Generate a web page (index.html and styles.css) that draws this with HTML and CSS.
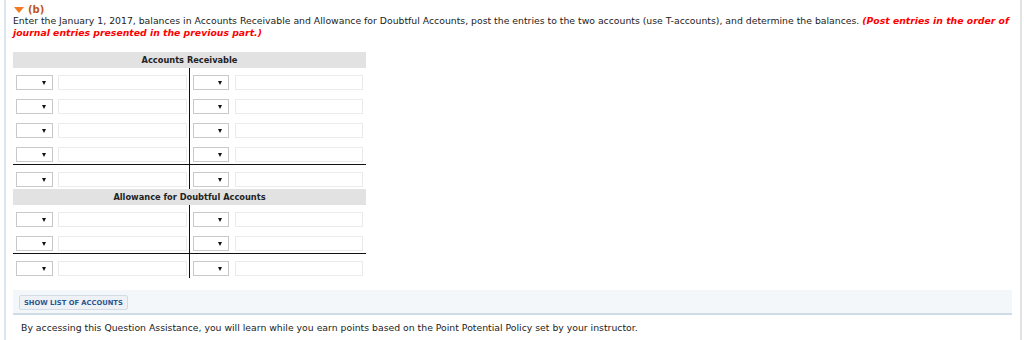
FILE: index.html
```html
<!DOCTYPE html>
<html lang="en">
<head>
    <meta charset="UTF-8">
    <meta name="viewport" content="width=device-width, initial-scale=1.0">
    <title>T-Accounts</title>
    <link rel="stylesheet" href="styles.css">
</head>
<body>
    <div class="question">
        <div class="part-title">
            <span class="caret"></span>
            <span class="part-label">(b)</span>
        </div>
        <p class="instructions">
            Enter the January 1, 2017, balances in Accounts Receivable and Allowance for Doubtful Accounts, post the entries to the two accounts (use T-accounts), and determine the balances.
            <em class="note">(Post entries in the order of journal entries presented in the previous part.)</em>
        </p>

        <div class="t-account">
            <div class="t-head">Accounts Receivable</div>
            <div class="t-section entries">
                <div class="t-side debit">
                    <div class="t-row"><span class="dropdown"></span><input type="text" class="amount"></div>
                    <div class="t-row"><span class="dropdown"></span><input type="text" class="amount"></div>
                    <div class="t-row"><span class="dropdown"></span><input type="text" class="amount"></div>
                    <div class="t-row"><span class="dropdown"></span><input type="text" class="amount"></div>
                </div>
                <div class="t-side credit">
                    <div class="t-row"><span class="dropdown"></span><input type="text" class="amount"></div>
                    <div class="t-row"><span class="dropdown"></span><input type="text" class="amount"></div>
                    <div class="t-row"><span class="dropdown"></span><input type="text" class="amount"></div>
                    <div class="t-row"><span class="dropdown"></span><input type="text" class="amount"></div>
                </div>
            </div>
            <div class="t-section balance">
                <div class="t-side debit">
                    <div class="t-row"><span class="dropdown"></span><input type="text" class="amount"></div>
                </div>
                <div class="t-side credit">
                    <div class="t-row"><span class="dropdown"></span><input type="text" class="amount"></div>
                </div>
            </div>
        </div>

        <div class="t-account">
            <div class="t-head">Allowance for Doubtful Accounts</div>
            <div class="t-section entries">
                <div class="t-side debit">
                    <div class="t-row"><span class="dropdown"></span><input type="text" class="amount"></div>
                    <div class="t-row"><span class="dropdown"></span><input type="text" class="amount"></div>
                </div>
                <div class="t-side credit">
                    <div class="t-row"><span class="dropdown"></span><input type="text" class="amount"></div>
                    <div class="t-row"><span class="dropdown"></span><input type="text" class="amount"></div>
                </div>
            </div>
            <div class="t-section balance">
                <div class="t-side debit">
                    <div class="t-row"><span class="dropdown"></span><input type="text" class="amount"></div>
                </div>
                <div class="t-side credit">
                    <div class="t-row"><span class="dropdown"></span><input type="text" class="amount"></div>
                </div>
            </div>
        </div>

        <div class="accounts-bar">
            <button class="accounts-btn">SHOW LIST OF ACCOUNTS</button>
        </div>

        <p class="assist">By accessing this Question Assistance, you will learn while you earn points based on the Point Potential Policy set by your instructor.</p>
    </div>
</body>
</html>
```

FILE: styles.css
```css
body {
    margin: 0;
    font-family: "DejaVu Sans", Verdana, sans-serif;
    font-size: 9.3px;
    color: #222;
    background-color: #fff;
}
.question {
    margin: 0 2px 0 4px;
    border-left: 2px solid #dbe5ef;
    border-right: 2px solid #e2e2e2;
    padding: 4px 8px 0 7px;
    height: 340px;
    box-sizing: border-box;
}
.part-title {
    display: flex;
    align-items: center;
    gap: 4px;
    height: 10px;
    line-height: 10px;
    padding: 1px 0 0 1px;
}
.caret {
    width: 0;
    height: 0;
    border-left: 5.5px solid transparent;
    border-right: 5.5px solid transparent;
    border-top: 6px solid #f47920;
}
.part-label {
    font-size: 10px;
    font-weight: bold;
    color: #c0561c;
}
.instructions {
    margin: 0;
    line-height: 12px;
}
.note {
    color: #f00;
    font-weight: bold;
}
.t-account {
    width: 353px;
    margin-top: 13px;
}
.t-account + .t-account {
    margin-top: 0;
}
.t-head {
    background-color: #e2e2e2;
    height: 16px;
    line-height: 16px;
    text-align: center;
    font-size: 8.25px;
    font-weight: bold;
}
.t-section {
    display: grid;
    grid-template-columns: 177px 176px;
}
.t-section.entries {
    border-bottom: 1px solid #111;
}
.t-side {
    display: flex;
    flex-direction: column;
    gap: 9px;
    padding: 7px 0 2px 3px;
}
.t-side.debit {
    border-right: 1px solid #111;
}
.t-row {
    display: flex;
    gap: 5px;
    height: 15px;
}
.credit .t-row {
    gap: 6px;
}
.dropdown {
    position: relative;
    width: 37px;
    height: 15px;
    border: 1px solid #c9c9c9;
    box-sizing: border-box;
    background-color: #fff;
}
.credit .dropdown {
    width: 36px;
}
.dropdown::after {
    content: "";
    position: absolute;
    right: 6px;
    top: 5px;
    border-left: 2.5px solid transparent;
    border-right: 2.5px solid transparent;
    border-top: 4px solid #111;
}
.amount {
    width: 129px;
    height: 15px;
    margin: 0;
    padding: 0;
    border: 1px solid #ebebeb;
    box-sizing: border-box;
}
.credit .amount {
    width: 128px;
}
.accounts-bar {
    margin-top: 12px;
    background-color: #f4f7fa;
    border-bottom: 2px solid #cfdbe7;
    padding: 5px 6px 3px;
}
.accounts-btn {
    display: block;
    height: 15px;
    padding: 0 4px;
    font-family: "DejaVu Sans", Verdana, sans-serif;
    font-size: 6.75px;
    font-weight: bold;
    color: #2a5590;
    background-color: #eef2f6;
    border: 1px solid #d3dbe4;
    border-radius: 2px;
}
.assist {
    margin: 7px 0 0;
    padding-left: 8px;
    line-height: 12px;
}
```
